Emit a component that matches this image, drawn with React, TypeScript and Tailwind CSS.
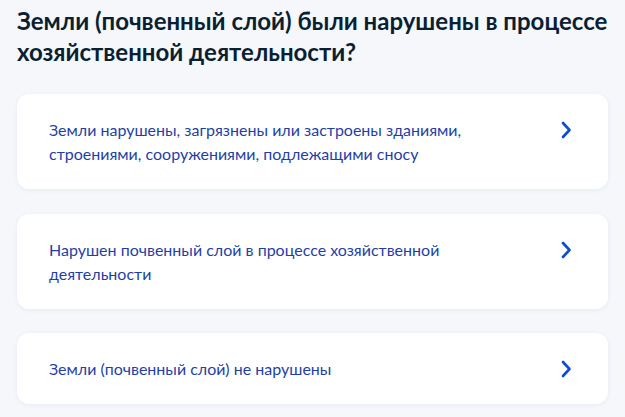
import React from 'react';

const options: string[] = [
  'Земли нарушены, загрязнены или застроены зданиями, строениями, сооружениями, подлежащими сносу',
  'Нарушен почвенный слой в процессе хозяйственной деятельности',
  'Земли (почвенный слой) не нарушены',
];

const Chevron: React.FC = () => (
  <svg width="24" height="24" viewBox="0 0 24 24" fill="none" className="shrink-0">
    <path d="M9 5L15.5 12L9 19" stroke="#0d4cd3" strokeWidth="2.6" strokeLinecap="round" strokeLinejoin="round" />
  </svg>
);

const App: React.FC = () => {
  return (
    <div className="min-h-[417px] bg-[#f5f7fb] px-[17px] pt-[5px] font-['Lato',sans-serif]">
      <h1 className="text-[24px] font-bold leading-[31px] text-[#0b1f33]">
        Земли (почвенный слой) были нарушены в процессе хозяйственной деятельности?
      </h1>
      <div className="mt-[27px] flex flex-col gap-[24.5px]">
        {options.map((text) => (
          <button
            key={text}
            className="flex w-full items-start justify-between rounded-[12px] bg-white pt-[24px] pb-[23px] pl-[32px] pr-[30px] text-left shadow-[0_1px_4px_rgba(40,80,160,0.08)]"
          >
            <span className="max-w-[460px] text-[16px] leading-[24px] text-[#1f3fa6]">{text}</span>
            <Chevron />
          </button>
        ))}
      </div>
    </div>
  );
};

export default App;
